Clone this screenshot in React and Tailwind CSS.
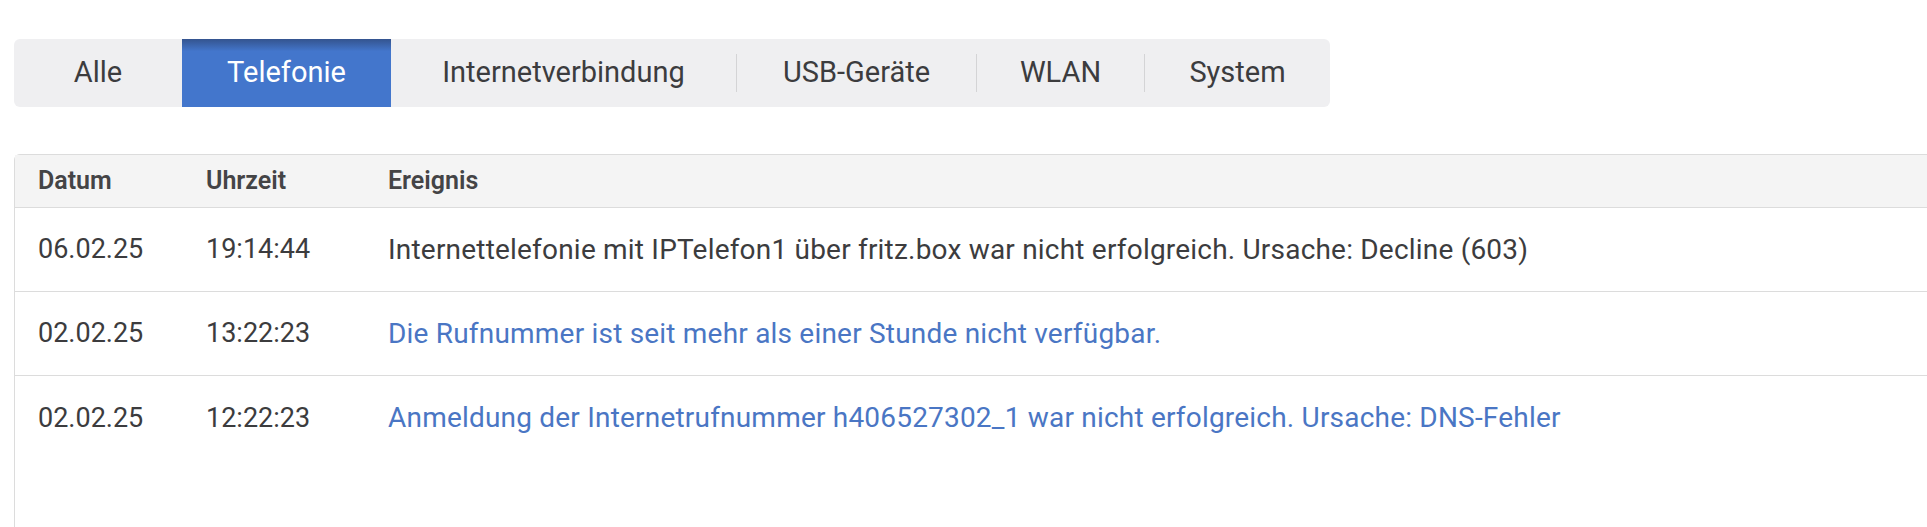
const tabs = [
  { label: 'Alle', w: 'w-[168px]' },
  { label: 'Telefonie', w: 'w-[209px]', active: true },
  { label: 'Internetverbindung', w: 'w-[345px]' },
  { label: 'USB-Geräte', w: 'w-[239px]', sep: true },
  { label: 'WLAN', w: 'w-[167px]', sep: true },
  { label: 'System', w: 'w-[185px]', sep: true },
];

const rows = [
  {
    date: '06.02.25',
    time: '19:14:44',
    text: 'Internettelefonie mit IPTelefon1 über fritz.box war nicht erfolgreich. Ursache: Decline (603)',
  },
  {
    date: '02.02.25',
    time: '13:22:23',
    text: 'Die Rufnummer ist seit mehr als einer Stunde nicht verfügbar.',
    link: true,
  },
  {
    date: '02.02.25',
    time: '12:22:23',
    text: 'Anmeldung der Internetrufnummer h406527302_1 war nicht erfolgreich. Ursache: DNS-Fehler',
    link: true,
  },
];

export default function App() {
  return (
    <div className="h-[527px] w-full overflow-hidden bg-white font-['Roboto',sans-serif] text-[#3c3c3e]">
      <div className="pl-[14px] pt-[39px]">
        <div className="flex h-[68px] w-fit rounded-[6px] bg-[#efeff1]">
          {tabs.map((t) => (
            <div key={t.label} className="flex items-center">
              {t.sep && <div className="h-[38px] w-px bg-[#d4d4d6]" />}
              <div
                className={
                  t.active
                    ? `${t.w} flex h-[68px] items-center justify-center bg-gradient-to-b from-[#34548f] via-[#4376cc] via-[18%] to-[#4376cc] text-[29px] text-white`
                    : `${t.w} flex h-[68px] items-center justify-center text-[29px]`
                }
              >
                {t.label}
              </div>
            </div>
          ))}
        </div>
      </div>

      <div className="ml-[14px] mt-[47px] h-[420px] w-[1960px] rounded-tl-[6px] border border-[#dcdcdc]">
        <div className="flex h-[53px] items-center border-b border-[#dcdcdc] bg-[#f4f4f4] text-[25px] font-semibold text-[#444446]">
          <div className="w-[191px] pl-[23px]">Datum</div>
          <div className="w-[182px]">Uhrzeit</div>
          <div>Ereignis</div>
        </div>
        {rows.map((r, i) => (
          <div
            key={i}
            className={
              i < rows.length - 1
                ? 'flex h-[84px] items-center border-b border-[#dcdcdc] text-[27px]'
                : 'flex h-[84px] items-center text-[27px]'
            }
          >
            <div className="w-[191px] pl-[23px]">{r.date}</div>
            <div className="w-[182px]">{r.time}</div>
            <div className={r.link ? 'text-[28px] tracking-[0.2px] text-[#4a76c4]' : 'text-[28px] tracking-[0.2px]'}>
              {r.text}
            </div>
          </div>
        ))}
      </div>
    </div>
  );
}
